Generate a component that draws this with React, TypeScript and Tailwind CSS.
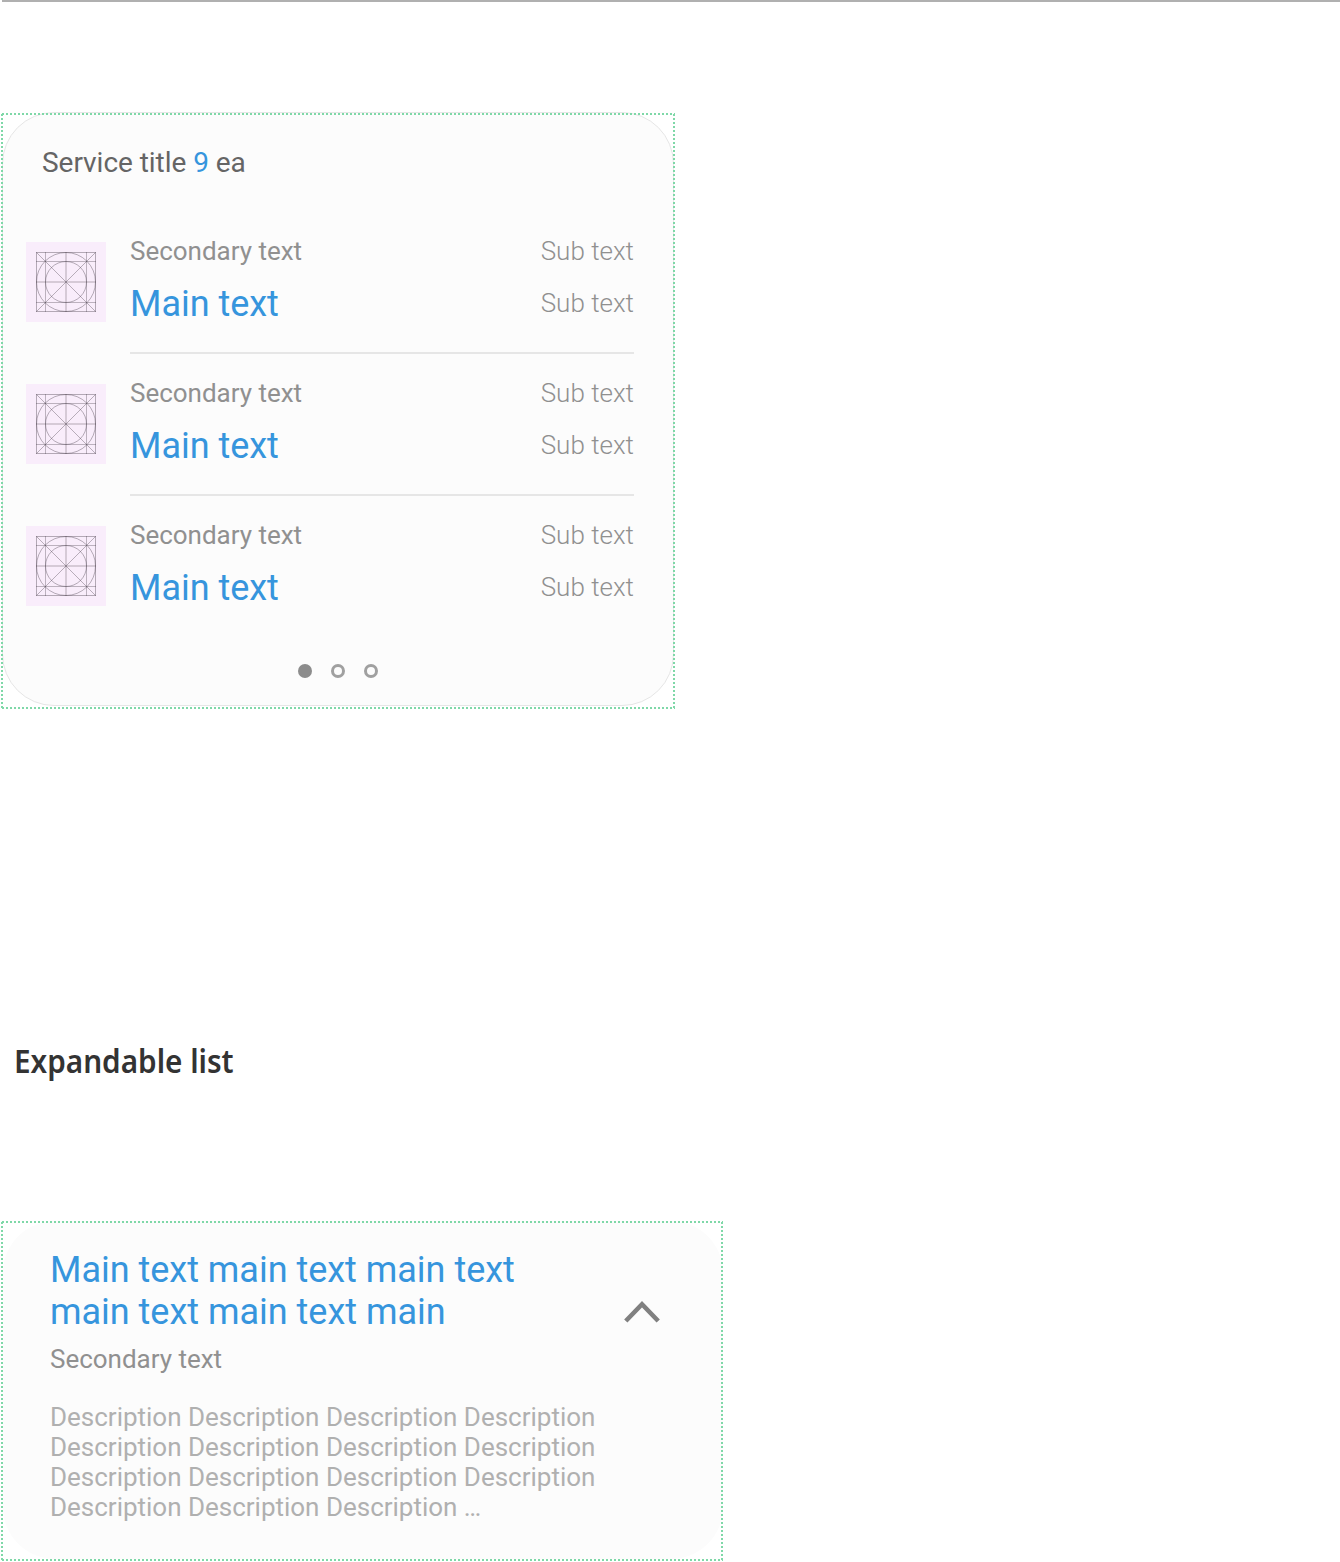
import React from "react";

function DottedFrame() {
  return (
    <div
      aria-hidden
      className="pointer-events-none absolute inset-0 bg-no-repeat [background-image:repeating-linear-gradient(90deg,transparent_0_1px,#7fd8a8_1px_3px,transparent_3px_4px),repeating-linear-gradient(90deg,transparent_0_1px,#7fd8a8_1px_3px,transparent_3px_4px),repeating-linear-gradient(180deg,transparent_0_1px,#7fd8a8_1px_3px,transparent_3px_4px),repeating-linear-gradient(180deg,transparent_0_1px,#7fd8a8_1px_3px,transparent_3px_4px)] [background-position:left_top,left_bottom,left_top,right_top] [background-size:100%_2px,100%_2px,2px_100%,2px_100%]"
    />
  );
}

function GridIcon() {
  return (
    <div className="flex size-20 shrink-0 items-center justify-center bg-[#f9edfb]">
      <svg width="60" height="60" viewBox="0 0 60 60" fill="none" stroke="#4b424e" strokeOpacity="0.4">
        <rect x="0.5" y="0.5" width="59" height="59" />
        <circle cx="30" cy="30" r="29.5" />
        <circle cx="30" cy="30" r="20.5" />
        <path d="M9.5 0V60M50.5 0V60M0 9.5H60M0 50.5H60" strokeOpacity="0.35" />
        <path d="M30 0V60M0 30H60" strokeOpacity="0.4" />
        <path d="M0 0L60 60M60 0L0 60" strokeOpacity="0.38" />
      </svg>
    </div>
  );
}

function ServiceRow({ last = false }: { last?: boolean }) {
  return (
    <div className="flex h-[142px] gap-6">
      <div className="pt-[30px]">
        <GridIcon />
      </div>
      <div className={last ? "flex flex-1 justify-between" : "flex flex-1 justify-between border-b-2 border-[#e6e6e6]"}>
        <div>
          <div className="mt-6 h-[30px] text-[26px] leading-[30px] tracking-[-0.02px] text-[#909090]">Secondary text</div>
          <div className="mt-[17px] text-[36px] leading-[42px] tracking-[-0.03px] text-[#3695dd]">Main text</div>
        </div>
        <div className="text-right text-[26px] font-light leading-[30px] text-[#909090]">
          <div className="mt-6">Sub text</div>
          <div className="mt-[22px]">Sub text</div>
        </div>
      </div>
    </div>
  );
}

export default function App() {
  return (
    <div className="flow-root h-[1562px] w-[1340px] overflow-hidden bg-white font-['Roboto',sans-serif]">
      <div className="ml-[2px] h-[2px] bg-[#b0b0b0]" />

      <section className="relative ml-px mt-[111px] h-[596px] w-[674px]">
        <div className="relative -top-px ml-px flex h-[594px] w-[672px] flex-col rounded-[52px] border border-[#e6e6e6] bg-[#fcfcfc] pl-[23px] pr-[39px]">
          <h2 className="ml-4 mt-[33px] h-[33px] text-[28px] leading-[33px] tracking-[-0.04px] text-[#656565]">
            Service title <span className="text-[#3695dd]">9</span> ea
          </h2>
          <div className="mt-[33px]">
            <ServiceRow />
            <ServiceRow />
            <ServiceRow last />
          </div>
          <div className="ml-[272px] mt-[26px] flex gap-[19px]">
            <span className="size-[14px] rounded-full bg-[#8c8c8c]" />
            <span className="size-[14px] rounded-full border-[3px] border-[#a0a0a0]" />
            <span className="size-[14px] rounded-full border-[3px] border-[#a0a0a0]" />
          </div>
        </div>
        <DottedFrame />
      </section>

      <h1 className="ml-[13.5px] mt-[330px] h-[44px] origin-left scale-x-[0.928] whitespace-nowrap font-['Noto_Sans',sans-serif] text-[32px] font-semibold leading-[44px] text-[#333333]">
        Expandable list
      </h1>

      <section className="relative ml-px mt-[138px] h-[340px] w-[722px]">
        <div className="ml-[2px] flex h-[338px] w-[720px] rounded-[52px] bg-[#fcfcfc] pl-[47px] pr-[62px]">
          <div className="w-[574px]">
            <div className="mt-7 whitespace-nowrap text-[36px] leading-[42px] tracking-[-0.02px] text-[#3695dd]">
              Main text main text main text
              <br />
              main text main text main
            </div>
            <div className="mt-[11px] text-[26px] leading-[30px] tracking-[-0.02px] text-[#909090]">Secondary text</div>
            <p className="mt-7 w-[560px] text-[26px] leading-[30px] tracking-[-0.01px] text-[#b0b0b0]">
              Description Description Description Description Description Description Description Description Description
              Description Description Description Description Description Description …
            </p>
          </div>
          <svg className="mt-[79px] shrink-0" width="38" height="24" viewBox="0 0 38 24" fill="none">
            <path d="M2.8 21L19 4.2L35.2 21" stroke="#808080" strokeWidth="4.6" />
          </svg>
        </div>
        <DottedFrame />
      </section>
    </div>
  );
}
